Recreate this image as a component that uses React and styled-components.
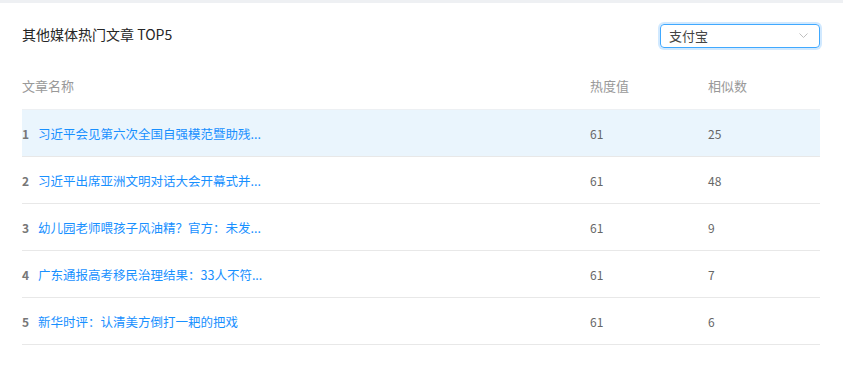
import React from 'react';
import styled, { createGlobalStyle } from 'styled-components';

const GlobalStyle = createGlobalStyle`
  body {
    margin: 0;
    background: #fff;
    font-family: "Noto Sans CJK SC", "Noto Sans", sans-serif;
  }
`;

const rows = [
  { title: '习近平会见第六次全国自强模范暨助残...', hot: 61, similar: 25 },
  { title: '习近平出席亚洲文明对话大会开幕式并...', hot: 61, similar: 48 },
  { title: '幼儿园老师喂孩子风油精？官方：未发...', hot: 61, similar: 9 },
  { title: '广东通报高考移民治理结果：33人不符...', hot: 61, similar: 7 },
  { title: '新华时评：认清美方倒打一耙的把戏', hot: 61, similar: 6 },
];

function App() {
  return (
    <>
      <GlobalStyle />
      <TopStrip />
      <Card>
        <Header>
          <Title>其他媒体热门文章 TOP5</Title>
          <Select>
            <span>支付宝</span>
            <svg width="9" height="5" viewBox="0 0 9 5">
              <path d="M0.5 0.5 L4.5 4.5 L8.5 0.5" fill="none" stroke="#bfbfbf" strokeWidth="1" />
            </svg>
          </Select>
        </Header>
        <Table>
          <HeadRow>
            <HeadCell>文章名称</HeadCell>
            <HeadCell>热度值</HeadCell>
            <HeadCell>相似数</HeadCell>
          </HeadRow>
          {rows.map((r, i) => (
            <Row key={i} active={i === 0}>
              <NameCell>
                <Index>{i + 1}</Index>
                <Link>{r.title}</Link>
              </NameCell>
              <Cell>{r.hot}</Cell>
              <Cell>{r.similar}</Cell>
            </Row>
          ))}
        </Table>
      </Card>
    </>
  );
}

const TopStrip = styled.div`
  height: 3px;
  background: #eef0f3;
`;

const Card = styled.div`
  padding: 0 23px 0 22px;
`;

const Header = styled.div`
  display: flex;
  align-items: center;
  justify-content: space-between;
  height: 59px;
  padding-top: 6px;
  box-sizing: border-box;
`;

const Title = styled.div`
  font-size: 14px;
  color: #262626;
  font-weight: 400;
  margin-top: -3px;
`;

const Select = styled.div`
  width: 160px;
  height: 24px;
  box-sizing: border-box;
  border: 1px solid #40a9ff;
  border-radius: 4px;
  box-shadow: 0 0 0 2px rgba(24, 144, 255, 0.2);
  display: flex;
  align-items: center;
  justify-content: space-between;
  padding: 0 11px 0 8px;
  font-size: 13px;
  color: #444;
`;

const Table = styled.div`
  display: flex;
  flex-direction: column;
`;

const Grid = styled.div`
  display: grid;
  grid-template-columns: 568px 118px 1fr;
  align-items: center;
  height: 47px;
  box-sizing: border-box;
  border-bottom: 1px solid #e8e8e8;
`;

const HeadRow = styled(Grid)`
  height: 48px;
  border-bottom-color: #edf0f3;
`;

const HeadCell = styled.div`
  font-size: 13px;
  color: #999;
`;

const Row = styled(Grid)`
  background: ${({ active }) => (active ? '#eaf5fd' : '#fff')};
`;

const NameCell = styled.div`
  display: flex;
  align-items: center;
  font-size: 12.5px;
`;

const Index = styled.span`
  width: 16px;
  color: #777;
  font-weight: 700;
  font-size: 12px;
`;

const Link = styled.span`
  color: #1890ff;
`;

const Cell = styled.div`
  font-size: 12px;
  color: #666;
`;

export default App;
